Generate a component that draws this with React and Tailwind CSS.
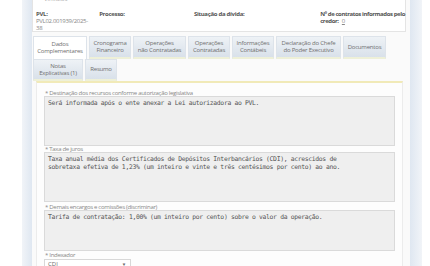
import React from 'react';

const SANS = { fontFamily: '"Open Sans", "Liberation Sans", Arial, sans-serif' };
const MONO = { fontFamily: '"DejaVu Sans Mono", "Liberation Mono", monospace' };

const tabsTop = [
  { label: ['Dados', 'Complementares'], w: 'w-[54px]', active: true },
  { label: ['Cronograma', 'Financeiro'], w: 'w-[42px]' },
  { label: ['Operações', 'não Contratadas'], w: 'w-[53px]' },
  { label: ['Operações', 'Contratadas'], w: 'w-[42px]' },
  { label: ['Informações', 'Contábeis'], w: 'w-[42px]' },
  { label: ['Declaração do Chefe', 'do Poder Executivo'], w: 'w-[65px]' },
  { label: ['Documentos'], w: 'w-[43px]' },
];

const tabsBottom = [
  { label: ['Notas', 'Explicativas (1)'], w: 'w-[50px]' },
  { label: ['Resumo'], w: 'w-[32px]' },
];

function Tab({ tab, h }) {
  return (
    <div
      className={`${tab.w} ${h} shrink-0 flex flex-col items-center justify-center text-center leading-[7px] text-[6px] tracking-[-0.2px] text-[#707070] border-t border-x border-[#dde3ea] ${
        tab.active
          ? 'bg-white'
          : 'bg-gradient-to-b from-[#eef2f6] to-[#d9e1ea] border-b-2 border-b-[#eef0d8]'
      }`}
    >
      {tab.label.map((l) => (
        <span key={l}>{l}</span>
      ))}
    </div>
  );
}

function Field({ label, lines, h }) {
  return (
    <div className="flex flex-col">
      <div className="text-[6px] tracking-[-0.3px] leading-[6px] text-[#888] pl-[1px]">* {label}</div>
      <div
        className={`${h} bg-[#efefef] border border-[#dadada] px-[3px] pt-[3px] text-[6.4px] tracking-[-0.33px] leading-[7.5px] text-[#555] whitespace-pre`}
        style={MONO}
      >
        {lines.map((l) => (
          <div key={l}>{l}</div>
        ))}
      </div>
    </div>
  );
}

export default function App() {
  return (
    <div className="w-[430px] h-[266px] overflow-hidden bg-white flex" style={SANS}>
      <div className="w-[22px] shrink-0" />
      <div className="w-[10px] shrink-0 bg-gradient-to-r from-[#f1f4f8] to-[#dfe7f1]" />
      <div className="w-[378px] shrink-0 bg-[#fafafa] flex flex-col">
        <div className="mt-[-5px] h-[38px] w-[374px] bg-white border border-[#e4e4e4] pl-[3px]">
          <div className="pl-[8px] text-[6px] leading-[6px] text-[#aaa]">Vínculos</div>
          <div className="flex mt-[9px] text-[6px] tracking-[-0.3px] leading-[6.8px]">
            <div className="w-[64px]">
              <div className="font-bold text-[#555]">PVL:</div>
              <div className="text-[#888]">PVL02.001939/2025-</div>
              <div className="text-[#888]">38</div>
            </div>
            <div className="w-[96px] font-bold text-[#555]">Processo:</div>
            <div className="w-[128px] font-bold text-[#555]">Situação da dívida:</div>
            <div className="flex-1 font-bold text-[#555] whitespace-nowrap tracking-[-0.4px]">
              <div>Nº de contratos informados pelo</div>
              <div>
                credor: <span className="font-normal text-[#888] underline ml-[2px]">0</span>
              </div>
            </div>
          </div>
        </div>

        <div className="mt-[4px] pl-[1px] flex gap-[2px]">
          {tabsTop.map((t) => (
            <Tab key={t.label.join()} tab={t} h="h-[23px]" />
          ))}
        </div>
        <div className="pl-[1px] flex gap-[2px]">
          {tabsBottom.map((t) => (
            <Tab key={t.label.join()} tab={t} h="h-[22px]" />
          ))}
        </div>

        <div className="ml-[4px] w-[367px] flex-1 bg-[#fdfdfd] border-t-2 border-[#f1eab8] border-x border-x-[#ececec] px-[7px] pt-[7px] flex flex-col">
          <Field
            label="Destinação dos recursos conforme autorização legislativa"
            lines={['Será informada após o ente anexar a Lei autorizadora ao PVL.']}
            h="h-[50px]"
          />
          <Field
            label="Taxa de juros"
            lines={[
              'Taxa anual média dos Certificados de Depósitos Interbancários (CDI), acrescidos de',
              'sobretaxa efetiva de 1,23% (um inteiro e vinte e três centésimos por cento) ao ano.',
            ]}
            h="h-[50px]"
          />
          <div className="h-[2px]" />
          <Field
            label="Demais encargos e comissões (discriminar)"
            lines={['Tarifa de contratação: 1,00% (um inteiro por cento) sobre o valor da operação.']}
            h="h-[41px]"
          />
          <div className="flex flex-col">
            <div className="text-[6px] tracking-[-0.3px] leading-[6px] text-[#888] pl-[1px] mt-[1px]">* Indexador</div>
            <div className="mt-[1px] w-[87px] h-[11px] bg-white border border-[#d8d8d8] flex items-center justify-between px-[3px] text-[6px] text-[#666]">
              <span>CDI</span>
              <span className="text-[6px] scale-75">▼</span>
            </div>
          </div>
        </div>
      </div>
      <div className="w-[12px] shrink-0 bg-gradient-to-r from-[#dfe7f1] to-[#f1f4f8]" />
    </div>
  );
}
